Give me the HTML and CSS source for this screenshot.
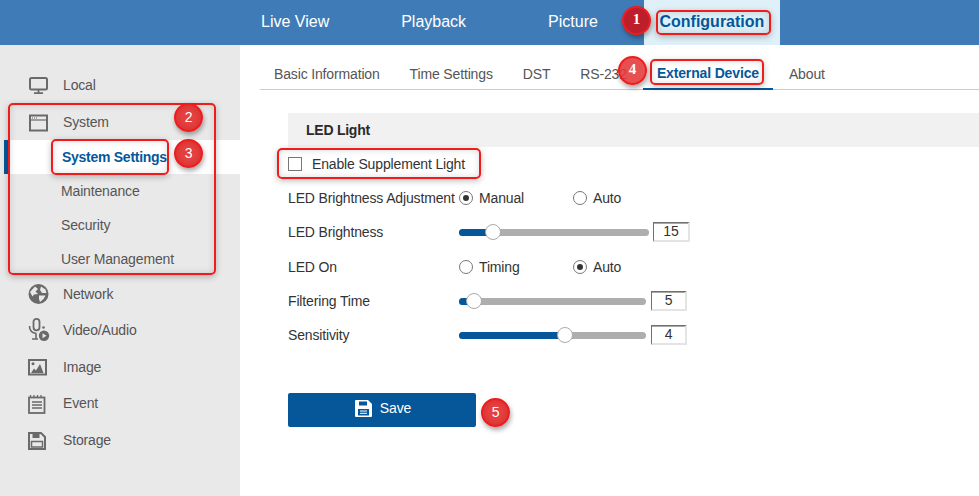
FILE: index.html
```html
<!DOCTYPE html>
<html lang="en">
<head>
<meta charset="utf-8">
<title>Configuration</title>
<link rel="stylesheet" href="styles.css">
</head>
<body>
<header class="topbar">
  <a class="topnav nav-live">Live View</a>
  <a class="topnav nav-play">Playback</a>
  <a class="topnav nav-pic">Picture</a>
  <a class="topnav nav-conf">Configuration</a>
</header>
<div class="layout">
  <aside class="sidebar">
    <div class="side-item">
      <svg class="side-icon" viewBox="0 0 20 20"><rect x="2" y="3" width="17" height="11.500" rx="1.500" fill="none" stroke="#6a6a6a" stroke-width="2"/><path d="M10.500 15v3M6 18.200h9" stroke="#6a6a6a" stroke-width="1.800" fill="none"/></svg>
      <span>Local</span>
    </div>
    <div class="side-item side-tall">
      <svg class="side-icon" viewBox="0 0 20 20"><rect x="2" y="3.500" width="17" height="15" fill="none" stroke="#6a6a6a" stroke-width="2"/><path d="M2 8h17" stroke="#6a6a6a" stroke-width="1.200"/><path d="M4 6h1M6 6h1M8 6h1" stroke="#6a6a6a"/></svg>
      <span>System</span>
    </div>
    <div class="sub-item sub-active">System Settings</div>
    <div class="sub-item">Maintenance</div>
    <div class="sub-item">Security</div>
    <div class="sub-item">User Management</div>
    <div class="side-item">
      <svg class="side-icon" viewBox="0 0 20 20"><circle cx="10.500" cy="10" r="10" fill="#6a6a6a"/><path d="M2 8l5-5.500 3 2.500-2.500 2.500L10 10l-4 .5-1.500 2zM11 11.500h6.500l-2 3.500-3.500 3-1-3zM13 2.500l4.500 3 1 3.500h-4.500l-2-3z" fill="#e9e9e9"/></svg>
      <span>Network</span>
    </div>
    <div class="side-item">
      <svg class="side-icon" viewBox="0 0 20 20"><rect x="5.500" y="-1.200" width="6" height="11.500" rx="3" fill="none" stroke="#6a6a6a" stroke-width="1.800"/><path d="M1.500 6c0 4.500 2.500 7 7 7.500M8 13.500v5M4 19h6" fill="none" stroke="#6a6a6a" stroke-width="1.600"/><circle cx="16" cy="15.800" r="5.200" fill="#6a6a6a"/><path d="M14.500 13.300l4 2.500-4 2.500z" fill="#e9e9e9"/><circle cx="15.500" cy="7.500" r="1.300" fill="#6a6a6a"/></svg>
      <span>Video/Audio</span>
    </div>
    <div class="side-item side-tall">
      <svg class="side-icon" viewBox="0 0 20 20"><rect x="1" y="3" width="17" height="14.500" fill="none" stroke="#6a6a6a" stroke-width="2"/><circle cx="5" cy="6.800" r="1.500" fill="#6a6a6a"/><path d="M3 16l3-4.500 2 2 4-6.500 3.500 9z" fill="#6a6a6a"/></svg>
      <span>Image</span>
    </div>
    <div class="side-item">
      <svg class="side-icon" viewBox="0 0 20 20"><rect x="1" y="4.500" width="15.500" height="15.500" fill="none" stroke="#6a6a6a" stroke-width="1.800"/><path d="M2.500 2v3M6 2v3M9.500 2v3M13 2v3M4 9h10M4 12h10M4 15h10" stroke="#6a6a6a" stroke-width="1.300"/></svg>
      <span>Event</span>
    </div>
    <div class="side-item side-tall">
      <svg class="side-icon" viewBox="0 0 20 20"><path d="M1 3h12l4 4v12H1z" fill="none" stroke="#6a6a6a" stroke-width="2"/><rect x="4.500" y="3" width="7" height="5" fill="#6a6a6a"/><rect x="3.500" y="11.500" width="11" height="5.500" fill="none" stroke="#6a6a6a" stroke-width="1.500"/></svg>
      <span>Storage</span>
    </div>
  </aside>
  <main class="content">
    <nav class="tabs">
      <a class="tab">Basic Information</a>
      <a class="tab">Time Settings</a>
      <a class="tab">DST</a>
      <a class="tab">RS-232</a>
      <a class="tab tab-active">External Device</a>
      <a class="tab">About</a>
    </nav>
    <section class="panel">
      <h2 class="panel-title">LED Light</h2>
      <label class="check-row"><span class="checkbox"></span>Enable Supplement Light</label>
      <div class="row">
        <span class="row-label">LED Brightness Adjustment</span>
        <span class="radio radio-on"></span><span class="radio-text">Manual</span>
        <span class="radio"></span><span class="radio-text">Auto</span>
      </div>
      <div class="row">
        <span class="row-label">LED Brightness</span>
        <div class="slider slider-long"><div class="fill" style="width:34px"></div><div class="thumb"></div></div>
        <span class="value value-long">15</span>
      </div>
      <div class="row row-tall">
        <span class="row-label">LED On</span>
        <span class="radio"></span><span class="radio-text">Timing</span>
        <span class="radio radio-on"></span><span class="radio-text">Auto</span>
      </div>
      <div class="row">
        <span class="row-label">Filtering Time</span>
        <div class="slider"><div class="fill" style="width:15px"></div><div class="thumb"></div></div>
        <span class="value">5</span>
      </div>
      <div class="row">
        <span class="row-label">Sensitivity</span>
        <div class="slider"><div class="fill" style="width:106px"></div><div class="thumb"></div></div>
        <span class="value">4</span>
      </div>
      <button class="save" type="button">
        <svg class="save-icon" viewBox="0 0 17 17"><path d="M1 0h12l4 4v12a1 1 0 0 1-1 1H1a1 1 0 0 1-1-1V1a1 1 0 0 1 1-1z" fill="#fff"/><rect x="4" y="1.500" width="8" height="4" fill="#05579a"/><rect x="3" y="9" width="11" height="6.500" fill="#05579a"/><path d="M5 11h7M5 13.300h7" stroke="#fff" stroke-width="1"/></svg>
        Save
      </button>
    </section>
  </main>
</div>

<div class="box box-conf"></div>
<div class="box box-ext"></div>
<div class="box box-sys"></div>
<div class="box box-set"></div>
<div class="box box-en"></div>
<div class="badge badge-1 badge-serif">1</div>
<div class="badge badge-2">2</div>
<div class="badge badge-3">3</div>
<div class="badge badge-4 badge-serif">4</div>
<div class="badge badge-5">5</div>
</body>
</html>
```

FILE: styles.css
```css
* { box-sizing: border-box; }
html, body { margin: 0; padding: 0; }
body {
  width: 979px;
  height: 496px;
  overflow: hidden;
  position: relative;
  background: #fff;
  font-family: "Liberation Sans", Arial, sans-serif;
  font-size: 14px;
  letter-spacing: -0.15px;
  color: #444;
}
.topbar {
  height: 45px;
  background: #3f7cb7;
  display: flex;
  align-items: stretch;
  font-size: 16px;
  letter-spacing: 0;
}
.topnav { display: flex; align-items: center; color: #fff; padding-bottom: 2px; }
.nav-live { margin-left: 261px; }
.nav-play { margin-left: 72px; }
.nav-pic { margin-left: 82px; }
.nav-conf {
  margin-left: 46px;
  width: 136px;
  justify-content: center;
  background: #dff0f8;
  color: #05579a;
  font-weight: bold;
}
.layout { display: flex; height: 451px; }
.sidebar {
  width: 240px;
  background: #e9e9e9;
  padding-top: 22px;
  flex: none;
}
.side-item {
  height: 36px;
  display: flex;
  align-items: center;
  padding-left: 28px;
  color: #555;
}
.side-tall { height: 37px; }
.side-icon { width: 20px; height: 20px; margin-right: 15px; flex: none; overflow: visible; }
.sub-item {
  height: 34px;
  padding-left: 61px;
  display: flex;
  align-items: center;
  color: #555;
}
.sub-active {
  margin-left: 4px;
  padding-left: 54px;
  background: #fff;
  border-left: 4px solid #05579a;
  color: #05579a;
  font-weight: bold;
  letter-spacing: -0.27px;
  width: 236px;
}
.content { flex: 1; min-width: 0; padding-left: 20px; }
.tabs {
  height: 45px;
  display: flex;
  border-bottom: 1px solid #ccc;
  color: #555;
}
.tab {
  display: flex;
  align-items: center;
  padding: 13px 14px 0;
  margin-right: 2px;
  height: 45px;
}
.tab-active {
  color: #05579a;
  font-weight: bold;
  border-bottom: 2px solid #05579a;
}
.panel { padding: 23px 0 0 28px; }
.panel-title {
  margin: 0;
  height: 34px;
  display: flex;
  align-items: center;
  padding-left: 18px;
  background: #f1f1f1;
  color: #2a2a2a;
  font-size: 14px;
  letter-spacing: -0.25px;
  font-weight: bold;
}
.check-row {
  height: 34px;
  display: flex;
  align-items: center;
  color: #333;
}
.checkbox {
  width: 14px;
  height: 14px;
  border: 1px solid #777;
  margin-right: 10px;
  background: #fff;
}
.row {
  height: 34px;
  display: flex;
  align-items: center;
  color: #333;
}
.row-tall { height: 35px; }
.row-label { width: 171px; flex: none; white-space: nowrap; }
.radio {
  width: 14px;
  height: 14px;
  border: 1px solid #777;
  border-radius: 50%;
  margin-right: 6px;
  flex: none;
  display: flex;
  align-items: center;
  justify-content: center;
}
.radio-on::after {
  content: "";
  width: 6px;
  height: 6px;
  border-radius: 50%;
  background: #333;
}
.radio-text { width: 94px; }
.slider {
  width: 187px;
  height: 7px;
  border-radius: 4px;
  background: #aeaeae;
  display: flex;
  align-items: center;
}
.slider-long { width: 190px; }
.fill { height: 7px; background: #05579a; border-radius: 4px 0 0 4px; }
.thumb {
  width: 16px;
  height: 16px;
  margin-left: -8px;
  border-radius: 50%;
  background: #fff;
  border: 1px solid #aaa;
  flex: none;
}
.value {
  margin-left: 5px;
  width: 36px;
  height: 20px;
  border-style: solid;
  border-width: 1px 2px 2px 1px;
  border-color: #707070 #e4e4e4 #e4e4e4 #707070;
  box-shadow: inset 0 1px 0 #a8a8a8;
  text-align: center;
  line-height: 16px;
  color: #333;
}
.value-long { margin-left: 4px; width: 37px; }
.save {
  display: flex;
  align-items: center;
  justify-content: center;
  gap: 8px;
  width: 188px;
  height: 34px;
  margin-top: 41px;
  padding: 0 0 4px 2px;
  border: 0;
  border-radius: 2px;
  background: #05579a;
  color: #fff;
  font: 14px "Liberation Sans", Arial, sans-serif;
  letter-spacing: -0.15px;
}
.save-icon { width: 17px; height: 17px; }

.box {
  position: absolute;
  border: 2px solid #f01c1c;
  border-radius: 5px;
  box-shadow: 0 2px 6px rgba(0,0,0,.25), inset 0 0 7px rgba(0,0,0,.14);
}
.box-conf { left: 656px; top: 10px; width: 115px; height: 25px; }
.box-ext { left: 650px; top: 59px; width: 114px; height: 26px; }
.box-sys { left: 8px; top: 103px; width: 208px; height: 172px; }
.box-set { left: 51px; top: 139px; width: 118px; height: 36px; }
.box-en { left: 277px; top: 148px; width: 204px; height: 31px; }
.badge {
  position: absolute;
  width: 29px;
  height: 29px;
  border-radius: 50%;
  background: radial-gradient(circle, #e4403f 40%, #d42a2f 100%);
  border: 2px solid #f01c1c;
  box-shadow: 1px 3px 5px rgba(0,0,0,.35);
  color: #fff;
  font-size: 14px;
  padding-bottom: 2px;
  display: flex;
  align-items: center;
  justify-content: center;
}
.badge-serif { font-family: "Liberation Serif", serif; font-weight: bold; font-size: 15px; }
.badge-1 { left: 622px; top: 6px; background: #bd1e2c; }
.badge-2 { left: 174px; top: 103px; }
.badge-3 { left: 174px; top: 139px; }
.badge-4 { left: 618px; top: 56px; background: rgba(228,56,56,.88); }
.badge-5 { left: 481px; top: 398px; }
```
